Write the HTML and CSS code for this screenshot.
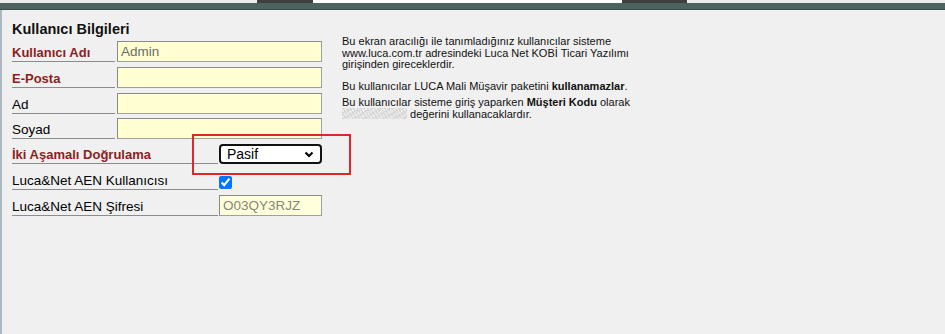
FILE: index.html
```html
<!DOCTYPE html>
<html lang="tr">
<head>
    <meta charset="UTF-8">
    <title>Kullanıcı Bilgileri</title>
    <link rel="stylesheet" href="styles.css">
</head>
<body>
    <!-- top tab strip -->
    <div class="tabs">
        <div class="tab-gap first"></div>
        <div class="tab dark"></div>
        <div class="tab active"></div>
        <div class="tab dark second"></div>
        <div class="tab-gap"></div>
    </div>
    <div class="bar"></div>

    <div class="panel">
        <div class="form">
            <h2 class="title">Kullanıcı Bilgileri</h2>
            <div class="row">
                <label class="lbl req">Kullanıcı Adı</label>
                <input class="fld" type="text" value="Admin">
            </div>
            <div class="row">
                <label class="lbl req">E-Posta</label>
                <input class="fld" type="text">
            </div>
            <div class="row tight">
                <label class="lbl">Ad</label>
                <input class="fld" type="text">
            </div>
            <div class="row tight">
                <label class="lbl">Soyad</label>
                <input class="fld" type="text">
            </div>
            <div class="row">
                <label class="lbl wide req">İki Aşamalı Doğrulama</label>
                <div class="select-wrap">
                    <select class="sel">
                        <option>Pasif</option>
                        <option>Aktif</option>
                    </select>
                    <svg class="chev" width="10" height="7" viewBox="0 0 10 7"><path d="M1.5 1.5 L5 5 L8.5 1.5" fill="none" stroke="#000" stroke-width="2"/></svg>
                </div>
            </div>
            <div class="row">
                <label class="lbl wide">Luca&amp;Net AEN Kullanıcısı</label>
                <input class="chk" type="checkbox" checked>
            </div>
            <div class="row">
                <label class="lbl wide">Luca&amp;Net AEN Şifresi</label>
                <input class="fld short" type="text" value="O03QY3RJZ" readonly>
            </div>
            <!-- highlight box from the screenshot -->
            <div class="mark"></div>
        </div>

        <div class="info">
            <p class="p1">Bu ekran aracılığı ile tanımladığınız kullanıcılar sisteme<br>www.luca.com.tr adresindeki Luca Net KOBİ Ticari Yazılımı<br>girişinden gireceklerdir.</p>
            <p class="p2">Bu kullanıcılar LUCA Mali Müşavir paketini <b>kullanamazlar</b>.</p>
            <p class="p3">Bu kullanıcılar sisteme giriş yaparken <b>Müşteri Kodu</b> olarak<br><span class="blur"></span> değerini kullanacaklardır.</p>
        </div>
    </div>
</body>
</html>
```

FILE: styles.css
```css
body {
    margin: 0;
    background: #f0f0f0;
    font-family: "Liberation Sans", Arial, sans-serif;
    color: #000;
}
.tabs {
    display: flex;
    height: 3px;
}
.tab-gap { flex: 1; background: #ececec; }
.tab-gap.first { flex: none; width: 257px; }
.tab.dark { width: 56px; background: #3f3f3f; }
.tab.dark.second { width: 65px; }
.tab.active { width: 309px; background: #fbfbfb; }
.bar {
    height: 6px;
    background: #4d635f;
    border-bottom: 1px solid #3c4c49;
}
.panel {
    display: flex;
    align-items: flex-start;
    min-height: 324px;
    border-left: 2px solid #aab8bf;
    padding: 11px 0 0 10px;
    box-sizing: border-box;
}
.form {
    position: relative;
    width: 310px;
}
.title {
    margin: 0;
    font-size: 14.5px;
    line-height: 17px;
    font-weight: bold;
    color: #111;
}
.row {
    display: flex;
    align-items: flex-end;
    height: 24px;
    margin-bottom: 2px;
}
.row.tight { margin-bottom: 1px; }
.lbl {
    width: 103px;
    flex: none;
    font-size: 13.5px;
    line-height: 17px;
    border-bottom: 1px solid #8c8c8c;
}
.lbl.req {
    font-weight: bold;
    color: #8e1d1d;
    font-size: 13px;
}
.lbl.wide { width: 206px; }
.fld {
    width: 205px;
    height: 21px;
    margin: 0 0 0 2px;
    padding: 0 3px;
    box-sizing: border-box;
    border: 1px solid #a0a0a0;
    border-top-color: #8a8a8a;
    border-left-color: #8a8a8a;
    background: #ffffd2;
    font-family: "Liberation Sans", Arial, sans-serif;
    font-size: 13.5px;
    color: #6a6a6a;
}
.fld.short {
    width: 103px;
    margin-left: 1px;
    background: #ffffdc;
    color: #878778;
}
.select-wrap {
    position: relative;
    margin: 0 0 0 1px;
}
.sel {
    appearance: none;
    width: 103px;
    height: 20px;
    padding: 0 6px;
    border: 2px solid #111;
    border-radius: 4px;
    background: #fff;
    font-family: "Liberation Sans", Arial, sans-serif;
    font-size: 14px;
    color: #000;
}
.chev {
    position: absolute;
    right: 8px;
    top: 7px;
}
.chk {
    width: 13px;
    height: 13px;
    margin: 0 0 1px 1px;
    accent-color: #0075ff;
}
.mark {
    position: absolute;
    left: 180px;
    top: 113px;
    width: 155px;
    height: 37px;
    border: 2px solid #e3242b;
}
.info {
    margin: 15px 0 0 20px;
    font-size: 11px;
    line-height: 11.5px;
    color: #111;
}
.info p { margin: 0; }
.info .p1 { margin-bottom: 10.5px; }
.info .p2 { margin-bottom: 3.5px; }
.info .p3 { line-height: 12px; }
.blur {
    display: inline-block;
    width: 65px;
    height: 11px;
    vertical-align: -1px;
    background:
        repeating-linear-gradient(60deg, rgba(200,200,200,0.5) 0 1px, transparent 1px 3px),
        repeating-linear-gradient(-30deg, #e4e4e4 0 2px, #d9d9d9 2px 3px, #ebebeb 3px 5px);
}
```
